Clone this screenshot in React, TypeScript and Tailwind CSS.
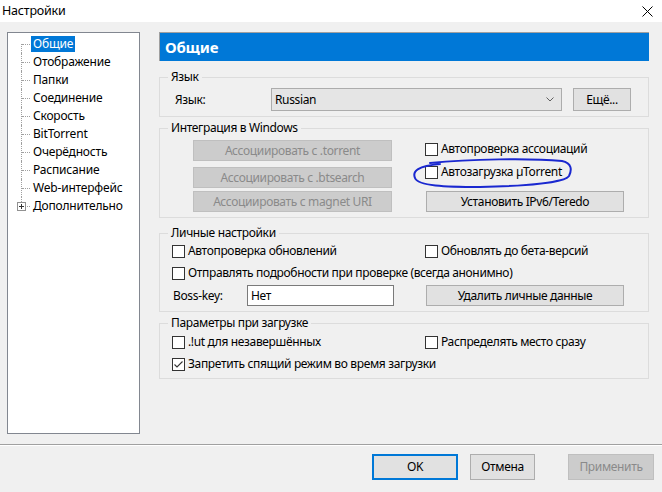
import React from "react";

function CheckBox({ label, checked = false }: { label: string; checked?: boolean }) {
  return (
    <div className="flex items-center h-[18px]">
      <span className="w-[13px] h-[13px] border border-[#333333] bg-white flex items-center justify-center shrink-0">
        {checked && (
          <svg width="11" height="11" viewBox="0 0 11 11">
            <path d="M1.5 5.5 L4 8 L9.5 2.5" fill="none" stroke="#333333" strokeWidth="1.1" />
          </svg>
        )}
      </span>
      <span className="ml-[3px] whitespace-nowrap">{label}</span>
    </div>
  );
}

function Btn({
  children,
  disabled = false,
  className = "",
}: {
  children: React.ReactNode;
  disabled?: boolean;
  className?: string;
}) {
  return (
    <div
      className={
        "flex items-center justify-center border whitespace-nowrap " +
        (disabled
          ? "bg-[#cccccc] border-[#bfbfbf] text-[#8a8a8a] "
          : "bg-[#e1e1e1] border-[#adadad] text-black ") +
        className
      }
    >
      {children}
    </div>
  );
}

function Group({
  title,
  className = "",
  children,
}: {
  title: string;
  className?: string;
  children: React.ReactNode;
}) {
  return (
    <div className={"relative border border-[#dcdcdc] " + className}>
      <span className="absolute left-[8px] top-[-9px] px-[3px] bg-[#f0f0f0] leading-[16px] whitespace-nowrap">
        {title}
      </span>
      {children}
    </div>
  );
}

const treeItems = [
  "Общие",
  "Отображение",
  "Папки",
  "Соединение",
  "Скорость",
  "BitTorrent",
  "Очерёдность",
  "Расписание",
  "Web-интерфейс",
  "Дополнительно",
];

export default function App() {
  return (
    <div className="w-[662px] h-[492px] bg-[#f0f0f0] overflow-hidden text-[12px] text-black font-['Noto_Sans','DejaVu_Sans',sans-serif] leading-[16px] tracking-[-0.35px]">
      {/* Title bar */}
      <div className="h-[22px] bg-white flex items-center justify-between pl-[2px] pr-[9px]">
        <span className="text-[12.5px] tracking-[-0.2px]">Настройки</span>
        <svg width="11" height="11" viewBox="0 0 11 11">
          <path d="M0.5 0.5 L10.5 10.5 M10.5 0.5 L0.5 10.5" stroke="#000" strokeWidth="1" />
        </svg>
      </div>

      {/* Main */}
      <div className="h-[422px] flex pt-[10px] pl-[7px]">
        {/* Tree */}
        <div className="w-[133px] h-[402px] bg-white border border-[#828790] pt-[2px] shrink-0 tracking-[-0.2px]">
          {treeItems.map((t, i) => {
            const first = i === 0;
            const last = i === treeItems.length - 1;
            return (
              <div key={t} className="flex h-[18px] items-center relative">
                <div className="w-[23px] h-[18px] relative shrink-0">
                  <div
                    className={
                      "absolute left-[13px] w-0 border-l border-dotted border-[#a0a0a0] " +
                      (first ? "top-[9px] bottom-0" : last ? "top-0 h-[9px]" : "top-0 bottom-0")
                    }
                  />
                  <div className="absolute left-[14px] top-[9px] w-[8px] h-0 border-t border-dotted border-[#a0a0a0]" />
                  {last && (
                    <div className="absolute left-[9px] top-[5px] w-[9px] h-[9px] border border-[#919191] bg-white flex items-center justify-center">
                      <svg width="7" height="7" viewBox="0 0 7 7">
                        <path d="M1 3.5 H6 M3.5 1 V6" stroke="#333" strokeWidth="1" />
                      </svg>
                    </div>
                  )}
                </div>
                <span
                  className={
                    "px-[2px] h-[16px] leading-[16px] whitespace-nowrap " +
                    (first ? "bg-[#0078d7] text-white" : "")
                  }
                >
                  {t}
                </span>
              </div>
            );
          })}
        </div>

        {/* Right panel */}
        <div className="ml-[19px] w-[490px] flex flex-col">
          <div className="h-[29px] bg-[#0078d7] border-t border-l border-[#a0a0a0] flex items-center pl-[5px]">
            <span className="text-white font-bold text-[15px] tracking-[-0.2px]">Общие</span>
          </div>

          {/* Язык */}
          <Group title="Язык" className="mt-[16px] h-[40px]">
            <div className="flex items-center pt-[10px] pl-[15px]">
              <span className="w-[96px]">Язык:</span>
              <div className="w-[291px] h-[23px] bg-[#e5e5e5] border border-[#acacac] flex items-center justify-between pl-[3px] pr-[7px]">
                <span>Russian</span>
                <svg width="8" height="5" viewBox="0 0 8 5">
                  <path d="M0.5 0.5 L4 4 L7.5 0.5" fill="none" stroke="#606060" strokeWidth="1" />
                </svg>
              </div>
              <Btn className="ml-[11px] w-[58px] h-[23px]">Ещё...</Btn>
            </div>
          </Group>

          {/* Интеграция */}
          <Group title="Интеграция в Windows" className="mt-[11px] h-[90px]">
            <div className="flex pt-[11px]">
              <div className="ml-[33px] w-[199px] flex flex-col">
                <Btn disabled className="h-[21px]">Ассоциировать с .torrent</Btn>
                <Btn disabled className="h-[21px] mt-[6px]">Ассоциировать с .btsearch</Btn>
                <Btn disabled className="h-[21px] mt-[3px]">Ассоциировать с magnet URI</Btn>
              </div>
              <div className="ml-[33px] w-[200px] flex flex-col">
                <div>
                  <CheckBox label="Автопроверка ассоциаций" />
                </div>
                <div className="mt-[5px]">
                  <CheckBox label="Автозагрузка µTorrent" />
                </div>
                <Btn className="h-[21px] mt-[10px] ml-[1px] w-[198px]">Установить IPv6/Teredo</Btn>
              </div>
            </div>
            {/* hand-drawn annotation */}
            <svg
              className="absolute left-[250px] top-[27px] pointer-events-none"
              width="164"
              height="34"
              viewBox="0 0 164 34"
            >
              <path
                d="M20 7 C60 3, 120 2, 152 5 C162 7, 162 14, 159 20 C155 26, 120 30, 70 31 C35 31, 8 30, 5 22 C2 15, 8 10, 30 8"
                fill="none"
                stroke="#1a28d0"
                strokeWidth="2"
                strokeLinecap="round"
              />
            </svg>
          </Group>

          {/* Личные настройки */}
          <Group title="Личные настройки" className="mt-[15px] h-[79px]">
            <div className="pt-[8px] pl-[12px]">
              <div className="flex">
                <div className="w-[253px]">
                  <CheckBox label="Автопроверка обновлений" />
                </div>
                <CheckBox label="Обновлять до бета-версий" />
              </div>
              <div className="mt-[4px]">
                <CheckBox label="Отправлять подробности при проверке (всегда анонимно)" />
              </div>
              <div className="flex items-center mt-[3px]">
                <span className="w-[75px] pl-[1px]">Boss-key:</span>
                <div className="w-[147px] h-[21px] bg-white border border-[#7a7a7a] flex items-center pl-[3px]">
                  Нет
                </div>
                <Btn className="ml-[32px] w-[198px] h-[21px]">Удалить личные данные</Btn>
              </div>
            </div>
          </Group>

          {/* Параметры при загрузке */}
          <Group title="Параметры при загрузке" className="mt-[11px] h-[56px]">
            <div className="pt-[9px] pl-[12px]">
              <div className="flex">
                <div className="w-[253px]">
                  <CheckBox label=".!ut для незавершённых" />
                </div>
                <CheckBox label="Распределять место сразу" />
              </div>
              <div className="mt-[4px]">
                <CheckBox label="Запретить спящий режим во время загрузки" checked />
              </div>
            </div>
          </Group>
        </div>
      </div>

      {/* Separator */}
      <div className="h-px bg-[#a0a0a0]" />
      <div className="h-px bg-white" />

      {/* Bottom buttons */}
      <div className="flex justify-end pr-[8px] pt-[8px]">
        <div className="w-[86px] h-[26px] bg-[#e1e1e1] border-2 border-[#0078d7] flex items-center justify-center">
          OK
        </div>
        <Btn className="ml-[12px] w-[65px] h-[26px]">Отмена</Btn>
        <Btn disabled className="ml-[33px] w-[86px] h-[26px]">Применить</Btn>
      </div>
    </div>
  );
}
